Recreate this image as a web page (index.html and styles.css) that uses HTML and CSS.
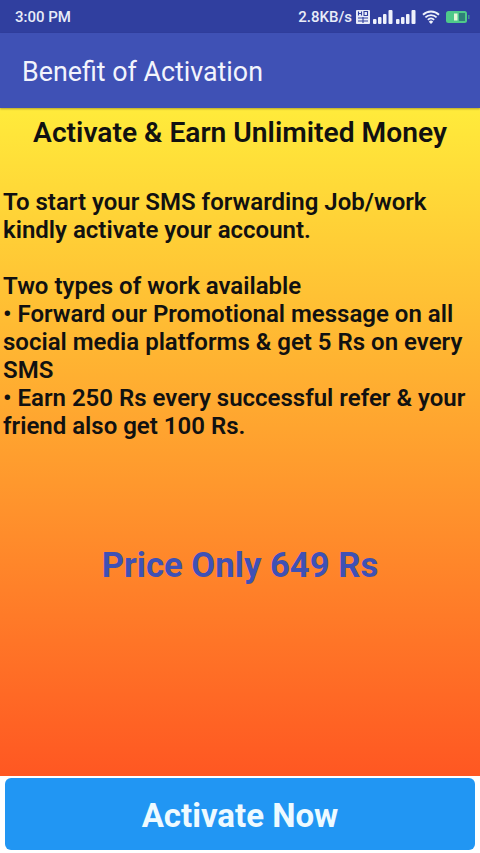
FILE: index.html
```html
<!DOCTYPE html>
<html lang="en">
<head>
<meta charset="utf-8">
<title>Benefit of Activation</title>
<link rel="stylesheet" href="styles.css">
</head>
<body>
<div class="statusbar">
  <span class="time">3:00 PM</span>
  <div class="status-right">
    <span class="speed">2.8KB/s</span>
    <svg class="hd" width="14" height="14" viewBox="0 0 14 14"><rect width="14" height="14" rx="1" fill="#e8ecf8"/><path d="M2.5 1.5v4M5.5 1.5v4M2.5 3.5h3M8 1.5h3.5v4H8zM2 8h10M2 11h10M7 7v6" stroke="#2f3f9f" stroke-width="1.1" fill="none"/></svg>
    <svg class="signal" width="20" height="14" viewBox="0 0 20 14"><g fill="#eef1fb"><rect x="0" y="9" width="3.5" height="5" rx="1"/><rect x="5" y="7" width="3.5" height="7" rx="1"/><rect x="10" y="4" width="3.5" height="10" rx="1"/><rect x="15.5" y="0" width="4" height="14" rx="1"/></g></svg>
    <svg class="signal" width="20" height="14" viewBox="0 0 20 14"><g fill="#eef1fb"><rect x="0" y="9" width="3.5" height="5" rx="1"/><rect x="5" y="7" width="3.5" height="7" rx="1"/><rect x="10" y="4" width="3.5" height="10" rx="1"/><rect x="15.5" y="0" width="4" height="14" rx="1"/></g></svg>
    <svg class="wifi" width="18" height="14" viewBox="0 0 18 14"><path d="M1 4.8a11.5 11.5 0 0 1 16 0M3.4 7.4a8 8 0 0 1 11.2 0M5.9 9.8a4.4 4.4 0 0 1 6.2 0" stroke="#eef1fb" stroke-width="1.9" fill="none"/><path d="M9 14l-2.2-2.3a3 3 0 0 1 4.4 0z" fill="#eef1fb"/></svg>
    <svg class="battery" width="24" height="12" viewBox="0 0 24 12"><rect x="0" y="0" width="21" height="12" rx="2.5" fill="#4fc98a"/><rect x="13" y="2" width="6" height="8" fill="#2f7f78"/><path d="M8 2.5h3.5v7H8z" fill="#e6f7d8"/><rect x="22" y="4" width="1.5" height="4" fill="#3f8f90"/></svg>
  </div>
</div>
<header class="appbar">Benefit of Activation</header>
<main class="content">
  <h1 class="headline">Activate &amp; Earn Unlimited Money</h1>
  <div class="body-text">
    <p class="para">To start your SMS forwarding Job/work kindly activate your account.</p>
    <p class="para">Two types of work available<br>• Forward our Promotional message on all social media platforms &amp; get 5 Rs on every SMS<br>• Earn 250 Rs every successful refer &amp; your friend also get 100 Rs.</p>
  </div>
  <div class="price">Price Only 649 Rs</div>
</main>
<footer class="footer">
  <button class="activate">Activate Now</button>
</footer>
</body>
</html>
```
FILE: styles.css
```css
* { box-sizing: border-box; }
html, body { margin: 0; padding: 0; }
body {
  width: 480px;
  height: 853px;
  display: flex;
  flex-direction: column;
  font-family: Roboto, "Liberation Sans", sans-serif;
  background: #fff;
  overflow: hidden;
}
.statusbar {
  height: 33px;
  flex: none;
  background: #303f9f;
  color: #e8ecf8;
  display: flex;
  align-items: center;
  justify-content: space-between;
  padding: 0 10px 0 15px;
  font-size: 15px;
  font-weight: 500;
}
.status-right { display: flex; align-items: center; }
.hd { margin-left: 4px; }
.signal { margin-left: 3px; }
.wifi { margin-left: 6px; }
.battery { margin-left: 6px; }
.appbar {
  height: 75px;
  flex: none;
  background: #3f51b5;
  color: #f2f4fc;
  font-size: 26.8px;
  line-height: 79px;
  padding-left: 22px;
  box-shadow: 0 1px 2px rgba(0,0,0,.3);
  position: relative;
}
.content {
  height: 668px;
  flex: none;
  background: linear-gradient(to bottom, #ffeb3b, #ff5722);
  color: #111;
  font-weight: 600;
  display: flex;
  flex-direction: column;
}
.headline {
  margin: 8px 0 0;
  font-size: 28.2px;
  line-height: 34px;
  font-weight: 600;
  text-align: center;
}
.body-text { margin-top: 38px; padding: 0 3px; font-size: 24px; line-height: 28px; }
.para { margin: 0 0 28px; }
.price {
  margin-top: 77px;
  text-align: center;
  font-size: 34.7px;
  line-height: 40px;
  color: #3f51b5;
  font-weight: 700;
}
.footer { flex: 1; padding: 2px 5px 3px 5px; background: #fff; display: flex; }
.activate {
  flex: 1;
  border: none;
  border-radius: 6px;
  background: #2196f3;
  color: #eefaff;
  font-family: inherit;
  font-size: 33px;
  font-weight: 700;
  padding: 3px 0 0;
}
```
